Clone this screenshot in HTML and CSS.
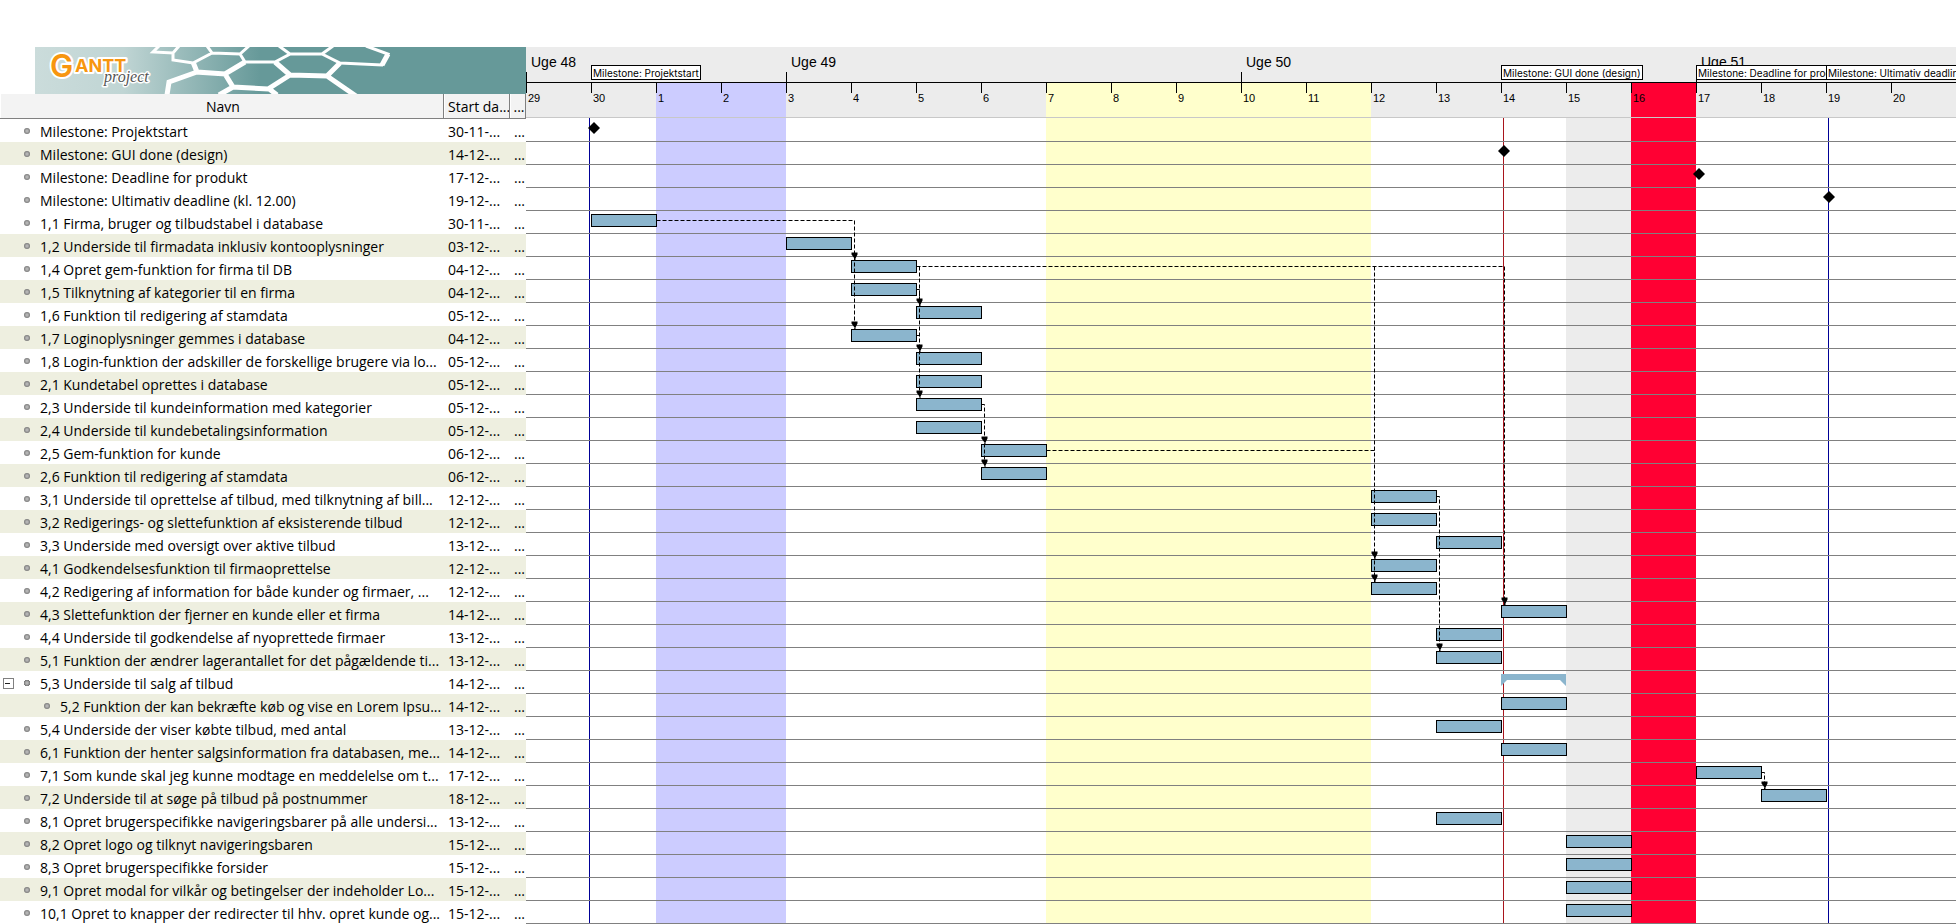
FILE: index.html
```html
<!DOCTYPE html>
<html lang="da">
<head>
<meta charset="utf-8">
<title>GanttProject</title>
<link rel="stylesheet" href="styles.css">
</head>
<body>
<main class="project">
<section class="tasks">
<svg class="banner" viewBox="0 0 491 47" role="img" aria-label="GanttProject">
<defs><linearGradient id="fade"><stop offset="0" stop-color="#cbdcdb"/><stop offset=".18" stop-color="#c0d5d4"/><stop offset=".46" stop-color="#669999"/></linearGradient></defs>
<rect width="491" height="47" fill="url(#fade)"/>
<g fill="none" stroke="#fff" stroke-width="3">
<path d="M124-1L118 5L138 6L144-1M138 6V13L158 16L177 6L172-1M177 6L205 7L214-1M205 7L210 15L240 15L255 7L244-1M255 7H287L298-1M287 7L305 16L347 18L353 7L331-1"/>
<path stroke-width="5" d="M158 15L162 25L190 27L210 15M162 25L134 35L132 48M190 27L198 40L233 42L255 28L240 15M198 40L184 48M233 41L242 48M255 28L292 29L305 16M292 29L321 49M347 18L353 7"/>
</g>
<g class="logo"><text class="logo-g" x="15" y="30">G</text><text class="logo-antt" x="40" y="25">ANTT</text><text class="logo-project" x="69" y="35">project</text></g>
</svg>
<table class="task-table">
<colgroup><col class="col-name"><col class="col-start"><col class="col-end"></colgroup>
<thead><tr><th>Navn</th><th>Start da...</th><th>...</th></tr></thead>
<tbody>
<tr><td>Milestone: Projektstart</td><td>30-11-...</td><td>...</td></tr>
<tr class="shade"><td>Milestone: GUI done (design)</td><td>14-12-...</td><td>...</td></tr>
<tr><td>Milestone: Deadline for produkt</td><td>17-12-...</td><td>...</td></tr>
<tr><td>Milestone: Ultimativ deadline (kl. 12.00)</td><td>19-12-...</td><td>...</td></tr>
<tr><td>1,1 Firma, bruger og tilbudstabel i database</td><td>30-11-...</td><td>...</td></tr>
<tr class="shade"><td>1,2 Underside til firmadata inklusiv kontooplysninger</td><td>03-12-...</td><td>...</td></tr>
<tr><td>1,4 Opret gem-funktion for firma til DB</td><td>04-12-...</td><td>...</td></tr>
<tr class="shade"><td>1,5 Tilknytning af kategorier til en firma</td><td>04-12-...</td><td>...</td></tr>
<tr><td>1,6 Funktion til redigering af stamdata</td><td>05-12-...</td><td>...</td></tr>
<tr class="shade"><td>1,7 Loginoplysninger gemmes i database</td><td>04-12-...</td><td>...</td></tr>
<tr><td>1,8 Login-funktion der adskiller de forskellige brugere via lo...</td><td>05-12-...</td><td>...</td></tr>
<tr class="shade"><td>2,1 Kundetabel oprettes i database</td><td>05-12-...</td><td>...</td></tr>
<tr><td>2,3 Underside til kundeinformation med kategorier</td><td>05-12-...</td><td>...</td></tr>
<tr class="shade"><td>2,4 Underside til kundebetalingsinformation</td><td>05-12-...</td><td>...</td></tr>
<tr><td>2,5 Gem-funktion for kunde</td><td>06-12-...</td><td>...</td></tr>
<tr class="shade"><td>2,6 Funktion til redigering af stamdata</td><td>06-12-...</td><td>...</td></tr>
<tr><td>3,1 Underside til oprettelse af tilbud, med tilknytning af bill...</td><td>12-12-...</td><td>...</td></tr>
<tr class="shade"><td>3,2 Redigerings- og slettefunktion af eksisterende tilbud</td><td>12-12-...</td><td>...</td></tr>
<tr><td>3,3 Underside med oversigt over aktive tilbud</td><td>13-12-...</td><td>...</td></tr>
<tr class="shade"><td>4,1 Godkendelsesfunktion til firmaoprettelse</td><td>12-12-...</td><td>...</td></tr>
<tr><td>4,2 Redigering af information for både kunder og firmaer, ...</td><td>12-12-...</td><td>...</td></tr>
<tr class="shade"><td>4,3 Slettefunktion der fjerner en kunde eller et firma</td><td>14-12-...</td><td>...</td></tr>
<tr><td>4,4 Underside til godkendelse af nyoprettede firmaer</td><td>13-12-...</td><td>...</td></tr>
<tr class="shade"><td>5,1 Funktion der ændrer lagerantallet for det pågældende ti...</td><td>13-12-...</td><td>...</td></tr>
<tr class="parent"><td><button class="toggle" type="button" aria-label="Fold sammen"></button>5,3 Underside til salg af tilbud</td><td>14-12-...</td><td>...</td></tr>
<tr class="shade child"><td>5,2 Funktion der kan bekræfte køb og vise en Lorem Ipsu...</td><td>14-12-...</td><td>...</td></tr>
<tr><td>5,4 Underside der viser købte tilbud, med antal</td><td>13-12-...</td><td>...</td></tr>
<tr class="shade"><td>6,1 Funktion der henter salgsinformation fra databasen, me...</td><td>14-12-...</td><td>...</td></tr>
<tr><td>7,1 Som kunde skal jeg kunne modtage en meddelelse om t...</td><td>17-12-...</td><td>...</td></tr>
<tr class="shade"><td>7,2 Underside til at søge på tilbud på postnummer</td><td>18-12-...</td><td>...</td></tr>
<tr><td>8,1 Opret brugerspecifikke navigeringsbarer på alle undersi...</td><td>13-12-...</td><td>...</td></tr>
<tr class="shade"><td>8,2 Opret logo og tilknyt navigeringsbaren</td><td>15-12-...</td><td>...</td></tr>
<tr><td>8,3 Opret brugerspecifikke forsider</td><td>15-12-...</td><td>...</td></tr>
<tr class="shade"><td>9,1 Opret modal for vilkår og betingelser der indeholder Lo...</td><td>15-12-...</td><td>...</td></tr>
<tr><td>10,1 Opret to knapper der redirecter til hhv. opret kunde og...</td><td>15-12-...</td><td>...</td></tr>
</tbody>
</table>
</section>

<section class="chart">
<header class="scale">
<div class="weeks"><span class="week short">Uge 48</span><span class="week">Uge 49</span><span class="week">Uge 50</span><span class="week">Uge 51</span></div>
<div class="days">
<span class="day">29</span><span class="day">30</span><span class="day blue">1</span><span class="day blue">2</span><span class="day">3</span><span class="day">4</span><span class="day">5</span><span class="day">6</span><span class="day yellow">7</span><span class="day yellow">8</span><span class="day yellow">9</span><span class="day yellow">10</span><span class="day yellow">11</span><span class="day">12</span><span class="day">13</span><span class="day">14</span><span class="day">15</span><span class="day red">16</span><span class="day">17</span><span class="day">18</span><span class="day">19</span><span class="day">20</span>
</div>
<div class="flag" style="--d:1">Milestone: Projektstart</div>
<div class="flag" style="--d:15">Milestone: GUI done (design)</div>
<div class="flag" style="--d:18">Milestone: Deadline for produkt</div>
<div class="flag" style="--d:20">Milestone: Ultimativ deadline (kl. 12.00)</div>
</header>
<div class="plot">
<div class="bands"><i class="blue" style="grid-column:3/5"></i><i class="yellow" style="grid-column:9/14"></i><i class="grey" style="grid-column:17"></i><i class="red" style="grid-column:18"></i></div>
<svg class="marks" aria-hidden="true"><g shape-rendering="crispEdges"><path stroke="#000096" d="M63.500-1V805M1302.500-1V805"/><path stroke="#a8141c" d="M977.500-1V805"/></g></svg>
<div class="rows">
<div class="row"><i class="diamond" style="--s:2"></i></div>
<div class="row"><i class="diamond" style="--s:16"></i></div>
<div class="row"><i class="diamond" style="--s:19"></i></div>
<div class="row"><i class="diamond" style="--s:21"></i></div>
<div class="row"><i class="bar" style="--s:2"></i></div>
<div class="row"><i class="bar" style="--s:5"></i></div>
<div class="row"><i class="bar" style="--s:6"></i></div>
<div class="row"><i class="bar" style="--s:6"></i></div>
<div class="row"><i class="bar" style="--s:7"></i></div>
<div class="row"><i class="bar" style="--s:6"></i></div>
<div class="row"><i class="bar" style="--s:7"></i></div>
<div class="row"><i class="bar" style="--s:7"></i></div>
<div class="row"><i class="bar" style="--s:7"></i></div>
<div class="row"><i class="bar" style="--s:7"></i></div>
<div class="row"><i class="bar" style="--s:8"></i></div>
<div class="row"><i class="bar" style="--s:8"></i></div>
<div class="row"><i class="bar" style="--s:14"></i></div>
<div class="row"><i class="bar" style="--s:14"></i></div>
<div class="row"><i class="bar" style="--s:15"></i></div>
<div class="row"><i class="bar" style="--s:14"></i></div>
<div class="row"><i class="bar" style="--s:14"></i></div>
<div class="row"><i class="bar" style="--s:16"></i></div>
<div class="row"><i class="bar" style="--s:15"></i></div>
<div class="row"><i class="bar" style="--s:15"></i></div>
<div class="row"><i class="summary" style="--s:16"></i></div>
<div class="row"><i class="bar" style="--s:16"></i></div>
<div class="row"><i class="bar" style="--s:15"></i></div>
<div class="row"><i class="bar" style="--s:16"></i></div>
<div class="row"><i class="bar" style="--s:19"></i></div>
<div class="row"><i class="bar" style="--s:20"></i></div>
<div class="row"><i class="bar" style="--s:15"></i></div>
<div class="row"><i class="bar" style="--s:17"></i></div>
<div class="row"><i class="bar" style="--s:17"></i></div>
<div class="row"><i class="bar" style="--s:17"></i></div>
<div class="row"><i class="bar" style="--s:17"></i></div>
</div>
<svg class="links" aria-hidden="true">
<defs><path id="arrow" d="M-3-8H3V-6L1-2V0H0V-2L-3-6Z"/></defs>
<g transform="translate(-525.5 -118.5)">
<g fill="none" stroke="#000" stroke-dasharray="4 2">
<path d="M656 220H854V329"/><path d="M916 266H1504V605"/><path d="M919 266V398"/><path d="M916 289H919V306"/><path d="M916 335H919"/><path d="M981 404H984V467"/><path d="M1046 450H1374"/><path d="M1374 266V582"/><path d="M1436 496H1439V651"/><path d="M1761 772H1764V789"/>
</g>
<use href="#arrow" x="854" y="260"/><use href="#arrow" x="854" y="329"/><use href="#arrow" x="919" y="306"/><use href="#arrow" x="919" y="352"/><use href="#arrow" x="919" y="398"/><use href="#arrow" x="984" y="444"/><use href="#arrow" x="984" y="467"/><use href="#arrow" x="1374" y="559"/><use href="#arrow" x="1374" y="582"/><use href="#arrow" x="1504" y="605"/><use href="#arrow" x="1439" y="651"/><use href="#arrow" x="1764" y="789"/>
</g>
</svg>
</div>
</section>
</main>
</body>
</html>
```
FILE: styles.css
```css
:root {
  --day: 65px;
  --row: 23px;
}

* { box-sizing: border-box; }

body {
  margin: 0;
  background: #fff;
  color: #000;
  font-family: "Open Sans", "Noto Sans", sans-serif;
}

.project {
  display: flex;
  padding-top: 47px;
}

/* task list */
.tasks { flex: 0 0 526px; }

.banner {
  display: block;
  width: 491px;
  height: 47px;
  margin-left: 35px;
}

.logo text {
  stroke: #fff;
  stroke-width: 4px;
  stroke-linejoin: round;
  paint-order: stroke;
}
.logo .logo-g {
  fill: #f7960f;
  font: 600 31px "Inter", sans-serif;
}
.logo .logo-antt {
  fill: #f7960f;
  font: 700 18px "Inter", sans-serif;
}
.logo .logo-project {
  fill: #555;
  stroke-width: 3px;
  font: italic 16px "Liberation Serif", serif;
}

.task-table {
  width: 100%;
  table-layout: fixed;
  border-collapse: separate;
  border-spacing: 0;
  font-size: 14px;
  line-height: 20px;
}
.col-name { width: 444px; }
.col-start { width: 66px; }
.col-end { width: 16px; }

.task-table th {
  height: 25px;
  padding: 2px 0 0 3px;
  background: #f3f3f3;
  border-right: 1px solid #808080;
  border-bottom: 1px solid #808080;
  box-shadow: inset 1px 0 #fff;
  font-weight: 400;
  white-space: nowrap;
  overflow: hidden;
}
.task-table th:nth-child(2) { padding-left: 4px; text-align: left; }

.task-table td {
  height: var(--row);
  padding: 2px 0 0 4px;
  white-space: nowrap;
  overflow: hidden;
}
.task-table td:first-child { padding-left: 24px; }
.task-table td:last-child { padding-left: 4px; }
.task-table .shade { background: #eeefe0; }
.task-table .child td:first-child { padding-left: 44px; }
.task-table .parent td:first-child { padding-left: 3px; }

.task-table td:first-child::before {
  content: "";
  display: inline-block;
  width: 6px;
  height: 6px;
  margin-right: 10px;
  border-radius: 50%;
  background: radial-gradient(circle, #b4b4b4 1px, #777 3px);
  vertical-align: 3px;
}
.task-table .parent td:first-child::before { display: none; }

.toggle {
  display: inline-flex;
  align-items: center;
  width: 37px;
  height: 9px;
  padding: 0;
  border: 0;
  background:
    linear-gradient(#222, #222) 2px 4px / 5px 1px no-repeat,
    radial-gradient(circle at 24px 4px, #b4b4b4 1px, #777 3px, transparent 3px);
}
.toggle::before {
  content: "";
  width: 9px;
  height: 9px;
  border: 1px solid #808080;
}

/* time scale */
.chart {
  position: relative;
  flex: 1 1 0;
  min-width: 0;
  overflow: hidden;
  font-family: "Liberation Sans", Arial, sans-serif;
}
.scale {
  position: relative;
  height: 72px;
  background: #ececec;
  border-bottom: 1px solid #fff;
}
.weeks {
  display: flex;
  height: 36px;
  border-bottom: 1px solid #000;
}
.week {
  flex: 0 0 calc(var(--day) * 7);
  padding: 6px 0 0 5px;
  background: linear-gradient(#000, #000) 0 100% / 1px 10px no-repeat;
  font-size: 14px;
  line-height: 18px;
}
.week.short { flex-basis: calc(var(--day) * 4); }

.days {
  display: flex;
  height: 35px;
  border-bottom: 1px solid #c8c8c8;
}
.day {
  flex: 0 0 var(--day);
  padding: 8px 0 0 2px;
  background-image: linear-gradient(#000, #000);
  background-size: 1px 10px;
  background-repeat: no-repeat;
  font-size: 11px;
  line-height: 14px;
}
.blue { background-color: #ccccff; }
.yellow { background-color: #ffffcc; }
.grey { background-color: #ececec; }
.red { background-color: #ff0033; }

.flag {
  position: absolute;
  top: 18px;
  left: calc(var(--day) * var(--d));
  height: 15px;
  padding: 0 1px;
  border: 1px solid #000;
  background: #fff;
  font-family: "Inter", sans-serif;
  font-size: 10px;
  line-height: 15px;
  white-space: nowrap;
}

/* bars */
.plot { position: relative; }
.bands {
  position: absolute;
  inset: -1px 0 0;
  display: grid;
  grid-template-columns: repeat(22, var(--day));
}
.bands i { grid-row: 1; }

.marks, .links {
  position: absolute;
  left: 0;
  top: 0;
  width: 100%;
  height: 100%;
  overflow: visible;
  pointer-events: none;
}
.rows { position: relative; }
.row {
  display: grid;
  grid-template-columns: repeat(22, var(--day));
  align-items: start;
  height: var(--row);
  padding-top: 3px;
  border-bottom: 1px solid #808080;
}
.bar {
  grid-column: var(--s);
  height: 13px;
  margin-right: -1px;
  border: 1px solid #000;
  background: #8bb5cd;
}
.diamond {
  grid-column: var(--s);
  width: 12px;
  height: 12px;
  margin-left: -3px;
  background: #000;
  clip-path: polygon(50% 0, 100% 50%, 50% 100%, 0 50%);
}
.summary {
  grid-column: var(--s);
  height: 12px;
  background: #8bb5cd;
  clip-path: polygon(0 0, 100% 0, 100% 12px, 59px 6px, 6px 6px, 0 12px);
}
```
